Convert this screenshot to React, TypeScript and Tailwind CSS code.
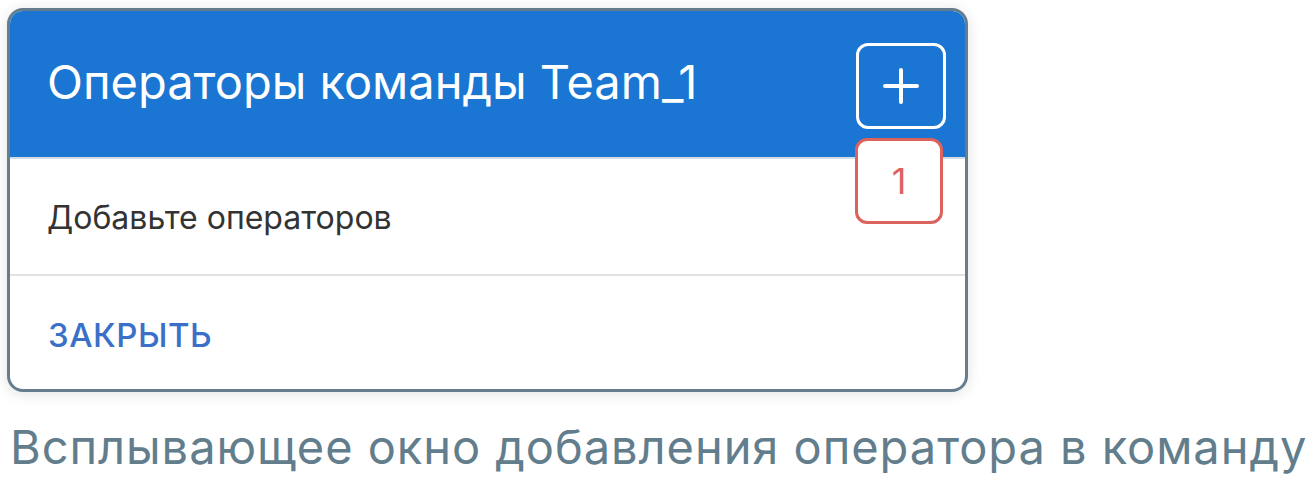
import React from 'react';

export default function App() {
  return (
    <div className="w-[1316px] h-[500px] bg-white overflow-hidden pl-[7px] pt-[8px]">
      <div className="relative w-[961px] h-[384px] rounded-[16px] border-[3px] border-[#657d8c] bg-white shadow-[0_2px_14px_rgba(0,0,0,0.12)] overflow-hidden flex flex-col">
        <div className="h-[148px] shrink-0 bg-[#1a76d2] border-b-2 border-[#d3dde8] flex items-center justify-between pl-[37px] pr-[19px]">
          <h1 className="text-white text-[47px] font-['Inter',sans-serif] font-normal leading-none pb-[6px]">
            Операторы команды Team_1
          </h1>
          <div className="w-[90px] h-[86px] rounded-[12px] border-[3px] border-white flex items-center justify-center mt-[3px]">
            <svg width="38" height="38" viewBox="0 0 38 38" fill="none">
              <path d="M19 3v32M3 19h32" stroke="white" strokeWidth="4" strokeLinecap="round" />
            </svg>
          </div>
        </div>
        <div className="h-[117px] shrink-0 border-b-2 border-[#e2e2e2] flex items-center pl-[37px] pt-[2px]">
          <span className="text-[32px] text-[#333333] font-['Inter',sans-serif] leading-none">Добавьте операторов</span>
        </div>
        <div className="flex-1 flex items-center pl-[38px] pt-[6px]">
          <span className="text-[33px] text-[#3a70c8] font-medium font-['Inter',sans-serif] leading-none tracking-[0.5px]">ЗАКРЫТЬ</span>
        </div>
        <div className="absolute left-[845px] top-[127px] w-[88px] h-[86px] rounded-[12px] border-[3px] border-[#dc635c] bg-white flex items-center justify-center">
          <span className="text-[36px] text-[#dc635c] font-['Inter',sans-serif] leading-none">1</span>
        </div>
      </div>
      <p className="mt-[31px] ml-[3px] text-[47px] text-[#627d8c] font-['Inter',sans-serif] leading-none tracking-[0.95px]">
        Всплывающее окно добавления оператора в команду
      </p>
    </div>
  );
}
